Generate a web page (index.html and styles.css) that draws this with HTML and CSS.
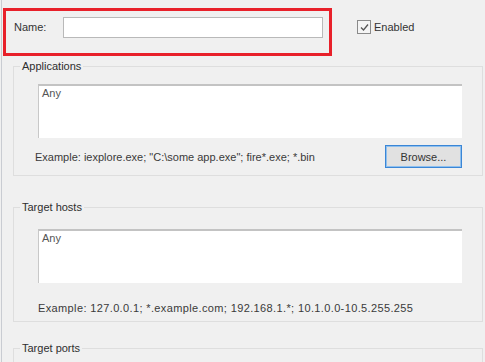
FILE: index.html
```html
<!DOCTYPE html>
<html>
<head>
<meta charset="utf-8">
<link rel="stylesheet" href="styles.css">
</head>
<body>
<div class="window">
  <div class="top-row">
    <div class="name-box">
      <label class="name-label" for="name">Name:</label>
      <input class="name-input" id="name" type="text">
    </div>
    <label class="enabled">
      <span class="check">
        <svg width="11" height="11" viewBox="0 0 11 11"><path d="M2 5.5 L4.5 8 L9 2.5" fill="none" stroke="#555" stroke-width="1.3"/></svg>
      </span>
      <span>Enabled</span>
    </label>
  </div>

  <fieldset class="group group-apps">
    <legend>Applications</legend>
    <div class="area">Any</div>
    <div class="hint-row">
      <span class="hint">Example: iexplore.exe; "C:\some app.exe"; fire*.exe; *.bin</span>
      <button class="browse">Browse...</button>
    </div>
  </fieldset>

  <fieldset class="group group-hosts">
    <legend>Target hosts</legend>
    <div class="area">Any</div>
    <div class="hint-row">
      <span class="hint hint-wide">Example: 127.0.0.1; *.example.com; 192.168.1.*; 10.1.0.0-10.5.255.255</span>
    </div>
  </fieldset>

  <fieldset class="group group-ports">
    <legend>Target ports</legend>
  </fieldset>
</div>
</body>
</html>
```
FILE: styles.css
```css
html, body {
  margin: 0;
  padding: 0;
  background: #f0f0f0;
  overflow: hidden;
}
body {
  width: 485px;
  height: 362px;
  font-family: "Liberation Sans", Arial, sans-serif;
  font-size: 11px;
  color: #3a3a3a;
}
.window {
  box-sizing: border-box;
  margin-left: 1px;
  border-left: 1px solid #c9ccd2;
  height: 362px;
  padding-left: 1px;
  overflow: hidden;
}
.top-row {
  display: flex;
  align-items: flex-start;
  padding-top: 8px;
}
.name-box {
  box-sizing: border-box;
  width: 329px;
  height: 48px;
  border: 3px solid #e8202a;
  display: flex;
  align-items: flex-start;
  padding: 6px 0 0 8px;
}
.name-label {
  width: 49px;
  line-height: 21px;
  color: #333;
}
.name-input {
  box-sizing: border-box;
  width: 260px;
  height: 21px;
  border: 1px solid #b9b9b9;
  background: #fff;
  margin: 0;
  padding: 0;
  outline: none;
}
.enabled {
  display: flex;
  align-items: center;
  gap: 3px;
  margin-left: 25px;
  margin-top: 12px;
  color: #333;
}
.check {
  box-sizing: border-box;
  width: 14px;
  height: 14px;
  border: 1px solid #8a8a8a;
  background: #f4f4f4;
  display: flex;
  align-items: center;
  justify-content: center;
}
.group {
  margin: 0 2px 0 10px;
  border: 1px solid #dedede;
  padding: 0 20px 7px 24px;
  min-width: 0;
}
.group legend {
  padding: 0 2px;
  margin-left: -18px;
  color: #2e2e2e;
}
.group-apps {
  margin-top: 4px;
}
.group-apps .area {
  margin-top: 12px;
}
.group-apps .hint-row {
  margin-top: 7px;
}
.group-hosts {
  margin-top: 25px;
  padding-bottom: 2px;
}
.group-hosts .area {
  margin-top: 16px;
}
.group-hosts .hint-row {
  margin-top: 13px;
}
.group-ports {
  margin-top: 20px;
  height: 40px;
}
.area {
  box-sizing: border-box;
  height: 54px;
  background: #fff;
  border-top: 2px solid #c3c3c3;
  border-left: 1px solid #c8c8c8;
  padding: 1px 3px;
  color: #555;
}
.hint-row {
  display: flex;
  align-items: center;
  justify-content: space-between;
  min-height: 23px;
}
.hint {
  color: #3a3a3a;
  margin-left: -3px;
}
.hint-wide {
  margin-left: 0;
  letter-spacing: 0.37px;
}
.browse {
  box-sizing: border-box;
  width: 77px;
  height: 23px;
  border: 1px solid #3b86d6;
  box-shadow: inset 0 0 0 1px #8fc0ee;
  background: #e1e1e1;
  font-family: inherit;
  font-size: 11px;
  color: #333;
  padding: 0;
}
```
